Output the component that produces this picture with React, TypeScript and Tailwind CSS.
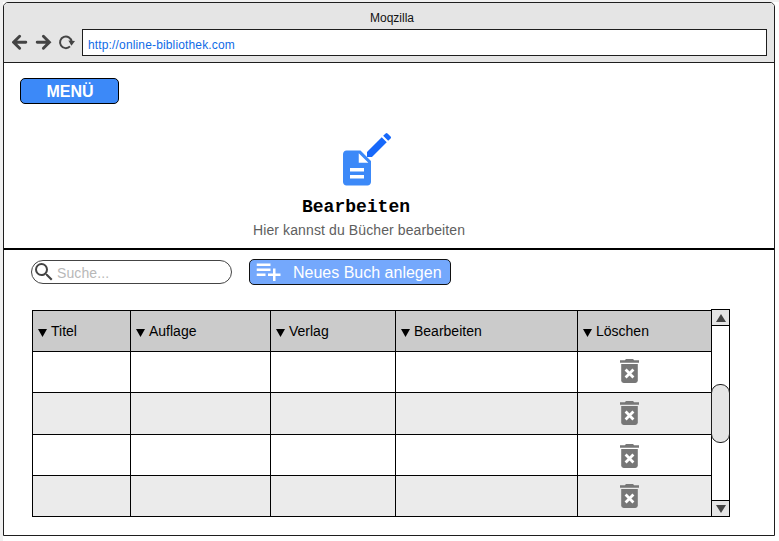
import React from "react";
import { MdDescription, MdEdit, MdPlaylistAdd, MdSearch } from "react-icons/md";

const columns = [
  { label: "Titel", width: "w-[98px]" },
  { label: "Auflage", width: "w-[140px]" },
  { label: "Verlag", width: "w-[125px]" },
  { label: "Bearbeiten", width: "w-[182px]" },
  { label: "Löschen", width: "w-[133px]" },
];

const rows = [
  { style: "h-[41px] bg-white", icon: "mt-[7px]" },
  { style: "h-[42px] bg-[#ebebeb]", icon: "mt-[8px]" },
  { style: "h-[41px] bg-white", icon: "mt-[9px]" },
  { style: "h-[41px] bg-[#ebebeb]", icon: "mt-[8px]" },
];

function TrashIcon({ className }: { className: string }) {
  return (
    <svg className={className} width="20" height="25" viewBox="0 0 20 25">
      <path d="M0 1.2h4.8L6 0h7l1.2 1.2H19v2.5H0z" fill="#777" />
      <path d="M1.2 5h16.6v16.6a2.4 2.4 0 0 1-2.4 2.4H3.6a2.4 2.4 0 0 1-2.4-2.4z" fill="#777" />
      <path d="M5.6 10.6l7.8 7.8M13.4 10.6l-7.8 7.8" stroke="#fff" strokeWidth="2.8" />
    </svg>
  );
}

function BrowserBar() {
  return (
    <header className="h-[60px] shrink-0 rounded-t-[4px] border-b border-[#1e1e1e] bg-[#e5e5e5]">
      <div className="h-[26px] pl-[6px] pt-[7px] text-center text-[12px] leading-[16px] text-[#111]">Moqzilla</div>
      <div className="flex h-[27px] items-stretch pl-[8px]">
        <svg className="h-[27px] w-[70px] shrink-0" viewBox="0 0 70 27" fill="none" stroke="#444" strokeWidth="2.9">
          <path d="M13.8 13.3H2M7.6 7.3 1.6 13.3l6 6" strokeLinecap="round" />
          <path d="M25.2 13.3h12M31.4 7.3l6 6-6 6" strokeLinecap="round" />
          <path d="M58 17.4A5.8 5.8 0 1 1 59.6 12.6" strokeWidth="2" />
          <path d="M56.4 11.6l6.6.4-3.6 4.8z" fill="#444" stroke="none" />
        </svg>
        <div className="w-[685px] border border-[#1e1e1e] bg-white pl-[5px] pt-[7px] text-[12px] leading-[16px] tracking-[0.15px] text-[#0f6be6]">
          http://online-bibliothek.com
        </div>
      </div>
    </header>
  );
}

function Scrollbar() {
  return (
    <div className="-mt-px flex h-[208px] w-[19px] flex-col border border-black bg-white">
      <div className="flex h-[16px] items-center justify-center border-b border-black bg-[#e5e5e5]">
        <svg width="10" height="8" viewBox="0 0 10 8"><path d="M5 0l5 8H0z" fill="#444" /></svg>
      </div>
      <div className="-mx-px mt-[58px] h-[59px] rounded-[9px] border border-[#1e1e1e] bg-[#e5e5e5]" />
      <div className="mt-auto flex h-[16px] items-center justify-center border-t border-black bg-[#e5e5e5]">
        <svg width="10" height="8" viewBox="0 0 10 8"><path d="M5 8l5-8H0z" fill="#444" /></svg>
      </div>
    </div>
  );
}

function BookTable() {
  return (
    <div className="mt-[25px] flex pl-[28px]">
      <div className="border-l border-t border-black">
        <div className="flex h-[41px] border-b border-black bg-[#cbcbcb]">
          {columns.map((c, i) => (
            <div key={c.label} className={`${c.width} ${i < 4 ? "border-r border-black" : ""} flex pl-[5px] pt-[12px] text-[14px] leading-[16px] text-black`}>
              <svg className="mr-[4px] mt-[6px] shrink-0" width="9" height="8" viewBox="0 0 9 8"><path d="M4.5 8L9 0H0z" /></svg>
              {c.label}
            </div>
          ))}
        </div>
        {rows.map((row, r) => (
          <div key={r} className={`${row.style} flex border-b border-black`}>
            {columns.map((c, i) => (
              <div key={c.label} className={`${c.width} ${i < 4 ? "border-r border-black" : ""}`}>
                {i === 4 && <TrashIcon className={`${row.icon} ml-[42px]`} />}
              </div>
            ))}
          </div>
        ))}
      </div>
      <Scrollbar />
    </div>
  );
}

export default function App() {
  return (
    <div className="h-[541px] w-[779px] overflow-hidden border-l-[3px] border-t-2 border-[#f0f0f0] bg-white font-['Liberation_Sans',Arial,sans-serif]">
      <div className="flex h-[534px] w-[772px] flex-col rounded-t-[5px] border border-[#1e1e1e] bg-white">
        <BrowserBar />
        <section className="h-[187px] shrink-0 border-b-2 border-black">
          <div className="px-[16px] pt-[15px]">
            <button className="block h-[26px] w-[99px] rounded-[5px] border border-black bg-[#3c89f8] pl-px pt-px text-[16px] font-bold leading-[24px] text-white">MENÜ</button>
          </div>
          <div className="ml-[332px] mt-[25px] flex h-[62px] items-start">
            <MdDescription className="mt-[18px] shrink-0" size={42} color="#3c89f8" />
            <MdEdit className="-ml-[15px] shrink-0" size={32} color="#1768fa" />
          </div>
          <h1 className="ml-[298px] mt-[5px] font-['Liberation_Mono','Courier_New',monospace] text-[18px] font-bold leading-[22px] text-black">Bearbeiten</h1>
          <p className="ml-[249px] mt-[4px] text-[14px] leading-[16px] tracking-[0.11px] text-[#5e5e5e]">Hier kannst du Bücher bearbeiten</p>
        </section>
        <div className="flex items-start pl-[27px] pt-[9px]">
          <div className="mt-px flex h-[24px] w-[201px] rounded-[12px] border border-[#444] bg-white">
            <MdSearch className="-mt-px mr-px shrink-0" size={24} color="#444" />
            <span className="pt-[4px] text-[14px] leading-[16px] tracking-[0.1px] text-[#b8b8b8]">Suche...</span>
          </div>
          <button className="ml-[17px] flex h-[26px] w-[202px] rounded-[5px] border border-[#111] bg-[#74a8fc] text-[16px] leading-[24px] text-white">
            <MdPlaylistAdd className="-mt-[4px] ml-[3px] shrink-0" size={30} />
            <span className="ml-[10px] whitespace-nowrap pt-px">Neues Buch anlegen</span>
          </button>
        </div>
        <BookTable />
      </div>
    </div>
  );
}
